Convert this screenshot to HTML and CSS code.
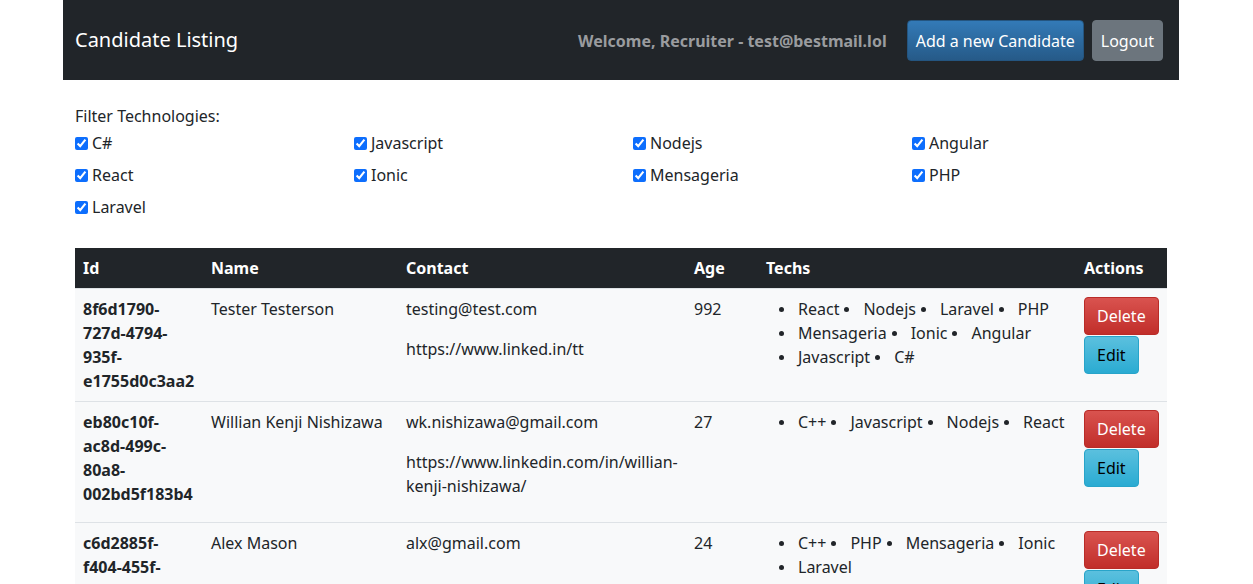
FILE: index.html
```html
<!DOCTYPE html>
<html lang="en">
<head>
<meta charset="utf-8">
<title>Candidate Listing</title>
<link rel="stylesheet" href="styles.css">
</head>
<body>
<div class="page">
  <header class="topbar">
    <span class="brand">Candidate Listing</span>
    <div class="topbar-right">
      <span class="welcome">Welcome, Recruiter - test@bestmail.lol</span>
      <button class="btn btn-add">Add a new Candidate</button>
      <button class="btn btn-logout">Logout</button>
    </div>
  </header>
  <main class="content">
    <div class="filter-label">Filter Technologies:</div>
    <div class="filter-grid">
      <label class="check"><input type="checkbox" checked>C#</label>
      <label class="check"><input type="checkbox" checked>Javascript</label>
      <label class="check"><input type="checkbox" checked>Nodejs</label>
      <label class="check"><input type="checkbox" checked>Angular</label>
      <label class="check"><input type="checkbox" checked>React</label>
      <label class="check"><input type="checkbox" checked>Ionic</label>
      <label class="check"><input type="checkbox" checked>Mensageria</label>
      <label class="check"><input type="checkbox" checked>PHP</label>
      <label class="check"><input type="checkbox" checked>Laravel</label>
    </div>
    <table class="candidates">
      <colgroup>
        <col class="col-id"><col class="col-name"><col class="col-contact"><col class="col-age"><col class="col-techs"><col class="col-actions">
      </colgroup>
      <thead>
        <tr><th>Id</th><th>Name</th><th>Contact</th><th>Age</th><th>Techs</th><th>Actions</th></tr>
      </thead>
      <tbody>
        <tr>
          <td class="cell-id">8f6d1790-727d-4794-935f-e1755d0c3aa2</td>
          <td>Tester Testerson</td>
          <td><p>testing@test.com</p><p>https://www.linked.in/tt</p></td>
          <td>992</td>
          <td><ul class="techs"><li>React</li><li>Nodejs</li><li>Laravel</li><li>PHP</li><li>Mensageria</li><li>Ionic</li><li>Angular</li><li>Javascript</li><li>C#</li></ul></td>
          <td><div class="actions"><button class="btn-sm btn-delete">Delete</button><button class="btn-sm btn-edit">Edit</button></div></td>
        </tr>
        <tr>
          <td class="cell-id">eb80c10f-ac8d-499c-80a8-002bd5f183b4</td>
          <td>Willian Kenji Nishizawa</td>
          <td><p>wk.nishizawa@gmail.com</p><p>https://www.linkedin.com/in/willian-kenji-nishizawa/</p></td>
          <td>27</td>
          <td><ul class="techs"><li>C++</li><li>Javascript</li><li>Nodejs</li><li>React</li></ul></td>
          <td><div class="actions"><button class="btn-sm btn-delete">Delete</button><button class="btn-sm btn-edit">Edit</button></div></td>
        </tr>
        <tr>
          <td class="cell-id">c6d2885f-f404-455f-9b1e-7a3c2d4e5f60</td>
          <td>Alex Mason</td>
          <td><p>alx@gmail.com</p></td>
          <td>24</td>
          <td><ul class="techs"><li>C++</li><li>PHP</li><li>Mensageria</li><li>Ionic</li><li>Laravel</li></ul></td>
          <td><div class="actions"><button class="btn-sm btn-delete">Delete</button><button class="btn-sm btn-edit">Edit</button></div></td>
        </tr>
      </tbody>
    </table>
  </main>
</div>
</body>
</html>
```

FILE: styles.css
```css
html, body {
  margin: 0;
  padding: 0;
  background: #ffffff;
}

body {
  font-family: "Noto Sans", "Open Sans", sans-serif;
  font-size: 16px;
  line-height: 24px;
  color: #212529;
}

.page {
  width: 1116px;
  margin-left: 63px;
}

.topbar {
  height: 80px;
  background: #212529;
  display: flex;
  align-items: center;
  justify-content: space-between;
  padding: 0 16px 0 12px;
  box-sizing: border-box;
}

.brand {
  color: #ffffff;
  font-size: 20px;
  line-height: 30px;
}

.topbar-right {
  display: flex;
  align-items: center;
}

.welcome {
  color: #9a9c9f;
  font-weight: 700;
  margin-top: 2px;
  margin-right: 20px;
}

.btn {
  font-family: inherit;
  font-size: 16px;
  line-height: 22px;
  padding: 9px 8px 8px;
  border: 1px solid transparent;
  border-radius: 4px;
  color: #ffffff;
  cursor: pointer;
  margin-top: 1px;
}

.btn-add {
  background: linear-gradient(to bottom, #337ab7 0%, #265a88 100%);
  border-color: #245580;
  margin-right: 8px;
}

.btn-logout {
  background: #6c757d;
  border-color: #6c757d;
}

.content {
  padding: 24px 12px 0;
}

.filter-label {
  margin-bottom: 3px;
}

.filter-grid {
  display: grid;
  grid-template-columns: repeat(4, 1fr);
  row-gap: 8px;
  margin: 0 -12px;
}

.check {
  display: flex;
  align-items: center;
  padding: 0 12px;
}

.check input {
  width: 13px;
  height: 13px;
  margin: 0 4px 0 0;
  accent-color: #0d6efd;
}

.candidates {
  width: 100%;
  margin-top: 29px;
  border-collapse: collapse;
  table-layout: fixed;
}

.col-id { width: 128px; }
.col-name { width: 195px; }
.col-contact { width: 288px; }
.col-age { width: 72px; }
.col-techs { width: 318px; }
.col-actions { width: 91px; }

.candidates th {
  background: #212529;
  color: #ffffff;
  text-align: left;
  font-weight: 700;
  padding: 8px;
  vertical-align: bottom;
  border-bottom: 1px solid #dee2e6;
}

.candidates td {
  background: #f8f9fa;
  padding: 8px;
  vertical-align: top;
  border-bottom: 1px solid #dee2e6;
}

.cell-id {
  font-weight: 700;
}

.candidates p {
  margin: 0 0 16px;
}

.techs {
  list-style: none;
  margin: 0 -8px 0 0;
  padding: 0 0 0 12px;
  display: flex;
  flex-wrap: wrap;
}

.techs li {
  display: flex;
  align-items: center;
  margin-right: 4px;
}

.techs li::before {
  content: "";
  width: 5px;
  height: 5px;
  border-radius: 50%;
  background: #212529;
  margin: 0 14px 0 1px;
}

.actions {
  display: flex;
  flex-direction: column;
  align-items: flex-start;
  gap: 1px;
}

.btn-sm {
  font-family: inherit;
  font-size: 16px;
  line-height: 24px;
  padding: 6px 12px;
  border: 1px solid transparent;
  border-radius: 4px;
  cursor: pointer;
}

.btn-delete {
  background: linear-gradient(to bottom, #d9534f 0%, #c12e2a 100%);
  border-color: #b92c28;
  color: #ffffff;
}

.btn-edit {
  background: linear-gradient(to bottom, #5bc0de 0%, #2aabd2 100%);
  border-color: #28a4c9;
  color: #000000;
}
```
